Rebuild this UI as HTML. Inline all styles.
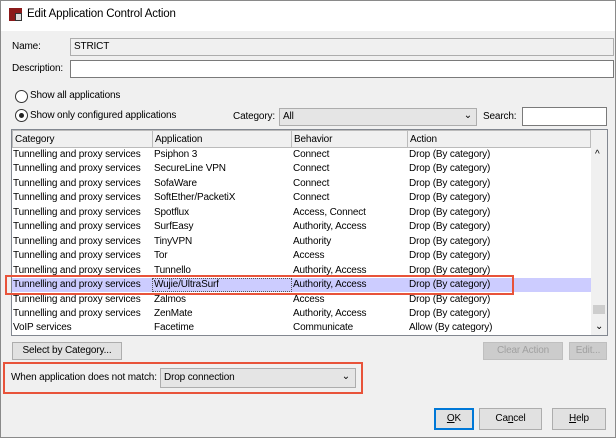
<!DOCTYPE html><html><head><style>
*{box-sizing:border-box;margin:0;padding:0}
body{width:616px;height:438px;overflow:hidden;font-family:"Liberation Sans",sans-serif;font-size:10px;letter-spacing:-0.15px;color:#000;background:#f0f0f0;position:relative;border:1px solid #8a8a8a}
.a{position:absolute;white-space:nowrap}
.inp{position:absolute;background:#fff;border:1px solid #7a7a7a}
.btn{position:absolute;background:#e1e1e1;border:1px solid #adadad;text-align:center;line-height:16px}
.rad{position:absolute;width:13px;height:13px;border:1px solid #333;border-radius:50%;background:#fff}
.row{position:absolute;left:11px;width:579px;height:14.4px;line-height:14.4px}
.row span{position:absolute}
</style></head><body>
<div class="a" style="left:0;top:0;width:614px;height:30px;background:#fff"></div>
<div class="a" style="left:8px;top:7px;width:13px;height:13px;background:#8b1a1a"></div>
<div class="a" style="left:14px;top:12px;width:7px;height:8px;background:#ddd;border:1px solid #333"></div>
<div class="a" style="left:26px;top:7px;font-size:11.5px">Edit Application Control Action</div>
<div class="a" style="left:11px;top:40px">Name:</div>
<div class="inp" style="left:69px;top:37px;width:544px;height:18px;background:#f0f0f0;border-color:#adadad;padding:2px 3px">STRICT</div>
<div class="a" style="left:11px;top:62px">Description:</div>
<div class="inp" style="left:69px;top:59px;width:544px;height:18px"></div>
<div class="rad" style="left:14px;top:89px"></div>
<div class="a" style="left:29px;top:89px">Show all applications</div>
<div class="rad" style="left:14px;top:108px"></div>
<div class="a" style="left:18px;top:112px;width:5px;height:5px;border-radius:50%;background:#222"></div>
<div class="a" style="left:29px;top:109px">Show only configured applications</div>
<div class="a" style="left:232px;top:110px">Category:</div>
<div class="inp" style="left:278px;top:107px;width:198px;height:18px;background:#e5e5e5;border-color:#adadad;padding:2px 3px">All<span style="position:absolute;right:4px;top:1px;font-size:10px">⌄</span></div>
<div class="a" style="left:482px;top:110px">Search:</div>
<div class="inp" style="left:521px;top:106px;width:85px;height:19px"></div>
<div class="inp" style="left:10px;top:128px;width:597px;height:207px;border-color:#828790"></div>
<div class="a" style="left:11px;top:129px;width:579px;height:18px;background:#f0f0f0;border-bottom:1px solid #c0c0c0"></div>
<div class="a" style="left:11px;top:129px;width:141px;height:18px;border:1px solid #bbb;padding:3px 2px">Category</div>
<div class="a" style="left:151px;top:129px;width:140px;height:18px;border:1px solid #bbb;padding:3px 2px">Application</div>
<div class="a" style="left:290px;top:129px;width:117px;height:18px;border:1px solid #bbb;padding:3px 2px">Behavior</div>
<div class="a" style="left:406px;top:129px;width:184px;height:18px;border:1px solid #bbb;padding:3px 2px">Action</div>
<div class="a" style="left:590px;top:129px;width:16px;height:205px;background:#f0f0f0"></div>
<div class="a" style="left:594px;top:148px;font-size:10px">^</div>
<div class="a" style="left:592px;top:304px;width:12px;height:9px;background:#cdcdcd"></div>
<div class="a" style="left:594px;top:320px;font-size:10px">⌄</div>
<div class="a" style="left:11px;top:277px;width:579px;height:14.4px;background:#ccccff"></div>
<div class="a" style="left:151px;top:277px;width:140px;height:14.4px;border:1px dotted #555"></div>
<div id="rows"></div>
<div class="a" style="left:4px;top:274px;width:509px;height:20px;border:2px solid #e8533a"></div>
<div class="btn" style="left:11px;top:341px;width:110px;height:18px">Select by Category...</div>
<div class="btn" style="left:482px;top:341px;width:80px;height:18px;color:#a0a0a0;background:#ccc;border-color:#bfbfbf">Clear Action</div>
<div class="btn" style="left:568px;top:341px;width:38px;height:18px;color:#a0a0a0;background:#ccc;border-color:#bfbfbf">Edit...</div>
<div class="a" style="left:2px;top:361px;width:360px;height:32px;border:2px solid #e8533a"></div>
<div class="a" style="left:10px;top:371px">When application does not match:</div>
<div class="inp" style="left:159px;top:367px;width:196px;height:20px;background:#e5e5e5;border-color:#adadad;padding:3px 3px">Drop connection<span style="position:absolute;right:5px;top:2px;font-size:10px">⌄</span></div>
<div class="btn" style="left:433px;top:407px;width:40px;height:22px;line-height:18px;border:2px solid #0078d7"><u>O</u>K</div>
<div class="btn" style="left:478px;top:407px;width:63px;height:22px;line-height:20px">Ca<u>n</u>cel</div>
<div class="btn" style="left:551px;top:407px;width:54px;height:22px;line-height:20px"><u>H</u>elp</div>
<script>
var d=[["Psiphon 3","Connect","Drop (By category)"],["SecureLine VPN","Connect","Drop (By category)"],["SofaWare","Connect","Drop (By category)"],["SoftEther/PacketiX","Connect","Drop (By category)"],["Spotflux","Access, Connect","Drop (By category)"],["SurfEasy","Authority, Access","Drop (By category)"],["TinyVPN","Authority","Drop (By category)"],["Tor","Access","Drop (By category)"],["Tunnello","Authority, Access","Drop (By category)"],["Wujie/UltraSurf","Authority, Access","Drop (By category)"],["Zalmos","Access","Drop (By category)"],["ZenMate","Authority, Access","Drop (By category)"],["Facetime","Communicate","Allow (By category)"]];
var h="";d.forEach(function(r,i){h+='<div class="row" style="top:'+(147+i*14.45)+'px"><span style="left:1px">'+(i==12?"VoIP services":"Tunnelling and proxy services")+'</span><span style="left:142px">'+r[0]+'</span><span style="left:281px">'+r[1]+'</span><span style="left:397px">'+r[2]+'</span></div>'});
document.getElementById("rows").innerHTML=h;
</script>
</body></html>
